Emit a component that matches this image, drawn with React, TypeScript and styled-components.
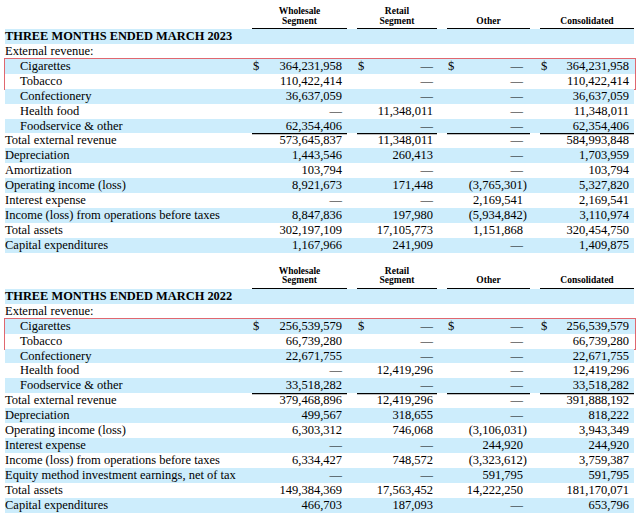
import React from 'react'
import styled, { createGlobalStyle } from 'styled-components'

const GlobalStyle = createGlobalStyle`
  html, body {
    margin: 0;
    padding: 0;
    background: #ffffff;
  }
  body {
    font-family: "Liberation Serif", "Times New Roman", serif;
    color: #000;
  }
`

const BAND = '#cdedfc'
const COLS = '237px 95px 80px 83px 94px'

type Line = {
  label: string
  indent?: boolean
  vals?: string[]
  dollar?: boolean
  total?: boolean
}

type Segment = {
  title: string
  lines: Line[]
}

const segments: Segment[] = [
  {
    title: 'THREE MONTHS ENDED MARCH 2023',
    lines: [
      { label: 'External revenue:' },
      { label: 'Cigarettes', indent: true, dollar: true, vals: ['364,231,958', '—', '—', '364,231,958'] },
      { label: 'Tobacco', indent: true, vals: ['110,422,414', '—', '—', '110,422,414'] },
      { label: 'Confectionery', indent: true, vals: ['36,637,059', '—', '—', '36,637,059'] },
      { label: 'Health food', indent: true, vals: ['—', '11,348,011', '—', '11,348,011'] },
      { label: 'Foodservice & other', indent: true, vals: ['62,354,406', '—', '—', '62,354,406'] },
      { label: 'Total external revenue', total: true, vals: ['573,645,837', '11,348,011', '—', '584,993,848'] },
      { label: 'Depreciation', vals: ['1,443,546', '260,413', '—', '1,703,959'] },
      { label: 'Amortization', vals: ['103,794', '—', '—', '103,794'] },
      { label: 'Operating income (loss)', vals: ['8,921,673', '171,448', '(3,765,301)', '5,327,820'] },
      { label: 'Interest expense', vals: ['—', '—', '2,169,541', '2,169,541'] },
      { label: 'Income (loss) from operations before taxes', vals: ['8,847,836', '197,980', '(5,934,842)', '3,110,974'] },
      { label: 'Total assets', vals: ['302,197,109', '17,105,773', '1,151,868', '320,454,750'] },
      { label: 'Capital expenditures', vals: ['1,167,966', '241,909', '—', '1,409,875'] },
    ],
  },
  {
    title: 'THREE MONTHS ENDED MARCH 2022',
    lines: [
      { label: 'External revenue:' },
      { label: 'Cigarettes', indent: true, dollar: true, vals: ['256,539,579', '—', '—', '256,539,579'] },
      { label: 'Tobacco', indent: true, vals: ['66,739,280', '—', '—', '66,739,280'] },
      { label: 'Confectionery', indent: true, vals: ['22,671,755', '—', '—', '22,671,755'] },
      { label: 'Health food', indent: true, vals: ['—', '12,419,296', '—', '12,419,296'] },
      { label: 'Foodservice & other', indent: true, vals: ['33,518,282', '—', '—', '33,518,282'] },
      { label: 'Total external revenue', total: true, vals: ['379,468,896', '12,419,296', '—', '391,888,192'] },
      { label: 'Depreciation', vals: ['499,567', '318,655', '—', '818,222'] },
      { label: 'Operating income (loss)', vals: ['6,303,312', '746,068', '(3,106,031)', '3,943,349'] },
      { label: 'Interest expense', vals: ['—', '—', '244,920', '244,920'] },
      { label: 'Income (loss) from operations before taxes', vals: ['6,334,427', '748,572', '(3,323,612)', '3,759,387'] },
      { label: 'Equity method investment earnings, net of tax', vals: ['—', '—', '591,795', '591,795'] },
      { label: 'Total assets', vals: ['149,384,369', '17,563,452', '14,222,250', '181,170,071'] },
      { label: 'Capital expenditures', vals: ['466,703', '187,093', '—', '653,796'] },
    ],
  },
]

const heads: [string, string][] = [
  ['Wholesale', 'Segment'],
  ['Retail', 'Segment'],
  ['', 'Other'],
  ['', 'Consolidated'],
]

// right padding per value column, so the figures end where the scan has them
const colPad = [5, 4, 7, 5]

const Page = styled.div`
  width: 629px;
  padding: 0 0 0 5px;
  display: flex;
  flex-direction: column;
  gap: 7px;
`

const Section = styled.section`
  display: flex;
  flex-direction: column;
`

const HeadRow = styled.div`
  display: grid;
  grid-template-columns: ${COLS};
  column-gap: 10px;
  height: 29px;
`

const HeadCell = styled.div`
  display: flex;
  flex-direction: column;
  justify-content: flex-end;
  align-items: center;
  font-size: 9.5px;
  font-weight: bold;
  line-height: 9.5px;
  padding-bottom: 2px;
  border-bottom: 1.5px solid #000;
`

const Row = styled.div<{ $shade: boolean }>`
  display: grid;
  grid-template-columns: ${COLS};
  column-gap: 10px;
  height: 14.93px;
  background: ${(p) => (p.$shade ? BAND : 'transparent')};
  font-size: 12.5px;
  line-height: 15.4px;
  white-space: nowrap;
`

const Title = styled.div`
  grid-column: 1 / -1;
  font-size: 12.4px;
  font-weight: bold;
  line-height: 15.5px;
`

const Label = styled.div<{ $indent?: boolean }>`
  padding-left: ${(p) => (p.$indent ? '15px' : '0')};
`

const Cell = styled.div<{ $pad: number; $total?: boolean }>`
  display: flex;
  justify-content: space-between;
  padding-right: ${(p) => p.$pad}px;
  box-shadow: ${(p) => (p.$total ? 'inset 0 1.3px 0 #000' : 'none')};
`

const Dollar = styled.span`
  padding-left: 1px;
`

const Num = styled.span<{ $neg?: boolean }>`
  margin-left: auto;
  margin-right: ${(p) => (p.$neg ? '-4px' : '0')};
`

const Boxed = styled.div`
  display: flex;
  flex-direction: column;
  outline: 1.2px solid #e0676f;
  outline-offset: 0;
  margin-right: -1px;
`

function LineRow({ line, shade }: { line: Line; shade: boolean }) {
  return (
    <Row $shade={shade}>
      <Label $indent={line.indent}>{line.label}</Label>
      {(line.vals || ['', '', '', '']).map((v, i) => (
        <Cell key={i} $pad={colPad[i]} $total={line.total}>
          {line.dollar && <Dollar>$</Dollar>}
          <Num $neg={v.startsWith('(')}>{v}</Num>
        </Cell>
      ))}
    </Row>
  )
}

function SegmentTable({ seg }: { seg: Segment }) {
  const first = seg.lines[0]
  const boxed = seg.lines.slice(1, 3)
  const rest = seg.lines.slice(3)
  return (
    <Section>
      <HeadRow>
        <div />
        {heads.map(([a, b], i) => (
          <HeadCell key={i}>
            {a && <span>{a}</span>}
            <span>{b}</span>
          </HeadCell>
        ))}
      </HeadRow>
      <Row $shade>
        <Title>{seg.title}</Title>
      </Row>
      <LineRow line={first} shade={false} />
      <Boxed>
        {boxed.map((l, i) => (
          <LineRow key={l.label} line={l} shade={i % 2 === 0} />
        ))}
      </Boxed>
      {rest.map((l, i) => (
        <LineRow key={l.label} line={l} shade={i % 2 === 0} />
      ))}
    </Section>
  )
}

export default function App() {
  return (
    <>
      <GlobalStyle />
      <Page>
        {segments.map((s) => (
          <SegmentTable key={s.title} seg={s} />
        ))}
      </Page>
    </>
  )
}
